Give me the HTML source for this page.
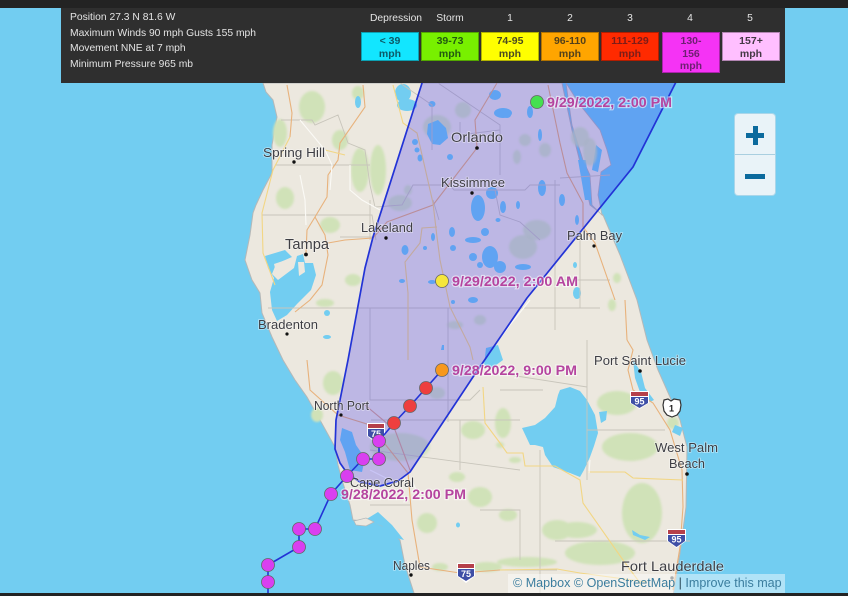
<!DOCTYPE html>
<html><head><meta charset="utf-8">
<style>
html,body{margin:0;padding:0;width:848px;height:596px;overflow:hidden;background:#72cdf1;font-family:"Liberation Sans",sans-serif}
svg{position:absolute;left:0;top:0;filter:blur(.3px)}
.top{position:absolute;left:0;top:0;width:848px;height:8px;background:#232323}
.bot{position:absolute;left:0;top:593px;width:848px;height:3px;background:#232323}
.panel{position:absolute;left:61px;top:8px;width:724px;height:75px;background:#2f2f2f;color:#e4e4e4;font-size:10.3px;filter:blur(.3px)}
.panel p{position:absolute;left:9px;margin:0;white-space:nowrap;line-height:14px}
.h{position:absolute;top:4px;width:60px;text-align:center;line-height:14px;white-space:nowrap}
.b{position:absolute;top:24px;width:58px;height:29px;text-align:center;font-weight:bold;font-size:10.5px;line-height:12.5px;box-sizing:border-box;padding-top:2px;border:1px solid rgba(0,0,0,.3)}
.zoom{position:absolute;left:735px;top:114px;width:40px;height:81px;background:#e9f3f8;border-radius:3px;box-shadow:0 0 0 1px #a9d6ea}
.zoom i{position:absolute;background:#0b6a9d;display:block}
.attr{position:absolute;left:508px;top:574px;width:277px;height:19px;background:rgba(255,255,255,.45);font-size:12.55px;line-height:19px;color:#3b7d9e;padding-left:5px;box-sizing:border-box;white-space:nowrap;filter:blur(.3px)}
.gr{filter:blur(1px)}
</style></head><body>
<svg width="848" height="596" viewBox="0 0 848 596" font-family="'Liberation Sans',sans-serif">
<rect width="848" height="596" fill="#72cdf1"/>
<!-- land -->
<path fill="#ece8df" stroke="#b4b8b8" stroke-width="1" d="M263 83L266 92 273 100 277 117 272 145 272 173 263 190 256 205 253 213 250 235 245 260 252 280 260 293 262 313 272 337 283 360 295 380 307 397 320 420 335 447 338 465 342 480 350 505 353 520 373 522 385 527 400 540 405 565 413 590 415 596H673L680 553 686 507 687 447 680 420 670 397 658 370 647 340 637 300 620 255 603 215 590 205 582 170 572 130 562 83Z"/>
<!-- merritt island -->
<path fill="#ece8df" stroke="#b4b8b8" stroke-width=".8" d="M566 83L580 105 600 130 607 150 611 165 601 172 598 195 602 215 592 205 590 175 583 160 572 125Z"/>
<path fill="#72cdf1" d="M578 160L586 160 590 200 585 200ZM596 145L602 150 598 172 592 170Z"/>
<!-- tampa bay -->
<path fill="#72cdf1" d="M265 256L285 250 292 257 276 264 272 274 278 280 294 268 297 256 303 254 305 263 313 263 316 275 311 290 297 304 287 315 277 321 272 310 270 292 274 278 268 268Z"/>
<path fill="#ece8df" d="M274 264L292 258 294 263 276 272ZM298 262L304 262 305 272 299 276Z"/>
<path fill="#72cdf1" d="M342 428L352 432 356 445 365 458 362 472 350 470 345 452 340 440ZM365 520L378 512 392 525 404 540 396 538 382 526Z"/>
<path fill="#ece8df" stroke="#b4b8b8" stroke-width=".7" d="M354 521L366 518 374 522 366 526 356 525Z"/>
<!-- greens -->
<g class="gr" fill="#d0e2b8">
<ellipse cx="312" cy="107" rx="13" ry="16"/><ellipse cx="285" cy="198" rx="9" ry="11"/><ellipse cx="330" cy="225" rx="10" ry="8"/><ellipse cx="360" cy="170" rx="9" ry="22"/><ellipse cx="378" cy="170" rx="8" ry="25"/><ellipse cx="340" cy="140" rx="8" ry="10"/><ellipse cx="280" cy="133" rx="7" ry="14"/><ellipse cx="353" cy="280" rx="8" ry="6"/><ellipse cx="358" cy="93" rx="6" ry="7"/><ellipse cx="333" cy="383" rx="10" ry="12"/><ellipse cx="317" cy="415" rx="6" ry="7"/><ellipse cx="325" cy="303" rx="9" ry="4"/>
<ellipse cx="473" cy="430" rx="12" ry="9"/><ellipse cx="427" cy="523" rx="10" ry="10"/><ellipse cx="457" cy="477" rx="8" ry="5"/><ellipse cx="480" cy="497" rx="12" ry="10"/><ellipse cx="440" cy="567" rx="8" ry="4"/><ellipse cx="487" cy="567" rx="15" ry="5"/><ellipse cx="500" cy="445" rx="4" ry="3"/>
<ellipse cx="617" cy="403" rx="20" ry="12"/><ellipse cx="630" cy="447" rx="28" ry="14"/><ellipse cx="642" cy="513" rx="20" ry="30"/><ellipse cx="557" cy="530" rx="15" ry="10"/><ellipse cx="577" cy="530" rx="20" ry="8"/><ellipse cx="600" cy="553" rx="35" ry="12"/><ellipse cx="508" cy="515" rx="9" ry="6"/><ellipse cx="527" cy="562" rx="30" ry="5"/><ellipse cx="673" cy="423" rx="6" ry="6"/><ellipse cx="503" cy="423" rx="8" ry="15"/><ellipse cx="515" cy="460" rx="6" ry="3"/><ellipse cx="612" cy="305" rx="4" ry="6"/><ellipse cx="617" cy="278" rx="4" ry="5"/>
<g fill-opacity=".8"><ellipse cx="517" cy="157" rx="4" ry="7"/><ellipse cx="523" cy="247" rx="14" ry="12"/><ellipse cx="537" cy="230" rx="14" ry="10"/><ellipse cx="400" cy="203" rx="12" ry="8"/><ellipse cx="408" cy="190" rx="4" ry="5"/><ellipse cx="463" cy="110" rx="8" ry="8"/><ellipse cx="400" cy="447" rx="30" ry="14"/><ellipse cx="437" cy="393" rx="8" ry="6"/><ellipse cx="580" cy="137" rx="9" ry="10"/><ellipse cx="590" cy="152" rx="7" ry="14"/><ellipse cx="437" cy="127" rx="14" ry="12"/><ellipse cx="525" cy="140" rx="6" ry="6"/><ellipse cx="545" cy="150" rx="6" ry="7"/><ellipse cx="455" cy="325" rx="8" ry="4"/><ellipse cx="480" cy="320" rx="6" ry="5"/></g>
</g>
<!-- lakes -->
<g fill="#72cdf1">
<path d="M570 387L580 391 587 400 595 415 598 433 594 446 590 457 584 470 580 477 570 473 553 467 545 455 543 447 535 445 530 445 522 428 535 425 545 418 555 407 558 395 560 390Z"/>
<path d="M599 412L607 411 606 420 601 423Z"/>
<path d="M486 348L498 345 503 360 492 368 484 365Z"/>
<path d="M428 124L438 120 446 128 448 138 440 145 432 144 427 134Z"/>
<ellipse cx="495" cy="95" rx="6" ry="5"/><ellipse cx="503" cy="113" rx="9" ry="5"/><ellipse cx="492" cy="193" rx="6" ry="6"/><ellipse cx="478" cy="208" rx="7" ry="13"/><ellipse cx="432" cy="104" rx="3.500" ry="3"/><ellipse cx="415" cy="142" rx="3" ry="3"/><ellipse cx="417" cy="150" rx="2.500" ry="2.500"/><ellipse cx="420" cy="158" rx="2.500" ry="3.500"/><ellipse cx="450" cy="157" rx="3" ry="3"/><ellipse cx="452" cy="232" rx="3" ry="5"/><ellipse cx="473" cy="240" rx="8" ry="3"/><ellipse cx="485" cy="232" rx="4" ry="4"/><ellipse cx="503" cy="207" rx="3" ry="6"/><ellipse cx="518" cy="205" rx="2" ry="4"/><ellipse cx="498" cy="220" rx="2.500" ry="2"/><ellipse cx="453" cy="248" rx="3" ry="3"/><ellipse cx="473" cy="257" rx="4" ry="4"/><ellipse cx="490" cy="257" rx="8" ry="11"/><ellipse cx="480" cy="265" rx="3" ry="3"/><ellipse cx="500" cy="267" rx="6" ry="6"/><ellipse cx="523" cy="267" rx="8" ry="3"/><ellipse cx="405" cy="250" rx="3.500" ry="5"/><ellipse cx="433" cy="237" rx="2" ry="4"/><ellipse cx="425" cy="248" rx="2" ry="2"/><ellipse cx="402" cy="281" rx="3" ry="2"/><ellipse cx="432" cy="282" rx="4" ry="2"/><ellipse cx="473" cy="300" rx="5" ry="3"/><ellipse cx="453" cy="302" rx="2" ry="2"/><ellipse cx="403" cy="93" rx="8" ry="9"/><ellipse cx="407" cy="105" rx="10" ry="6"/><ellipse cx="358" cy="102" rx="3" ry="6"/><ellipse cx="327" cy="313" rx="3" ry="3"/><ellipse cx="327" cy="337" rx="4" ry="2"/><ellipse cx="542" cy="188" rx="4" ry="8"/><ellipse cx="575" cy="265" rx="2" ry="3"/><ellipse cx="577" cy="293" rx="4" ry="6"/><ellipse cx="577" cy="220" rx="2" ry="5"/><ellipse cx="562" cy="200" rx="3" ry="6"/><ellipse cx="507" cy="115" rx="4" ry="3"/><ellipse cx="530" cy="112" rx="3" ry="6"/><ellipse cx="540" cy="135" rx="2" ry="6"/>
<path d="M633 360L641 372 645 388 654 400 650 402 640 392 635 378ZM675 425L683 428 680 436 672 432ZM632 530L640 535 650 537 645 540 633 535ZM442 345L444 345 444 350 441 350Z"/>
<ellipse cx="458" cy="525" rx="2" ry="2.500"/>
</g>
<!-- county lines -->
<g fill="none" stroke="#c8c5bb" stroke-width=".9">
<path d="M281 120H312L315 125 338 115 348 143 365 150 370 185 375 207 402 205 413 185 450 185 454 190 525 190 530 185 560 185M262 215H372L376 240M275 165L370 165M400 83L432 105V150M500 130L460 135V122M495 190L500 215 520 222 540 240M433 200L439 220M370 200V240M373 237H340M268 308H600M370 308V400M370 400H470L480 390M371 420H520M370 450L520 470M448 360L448 422M448 308V360M540 450V593M500 390H543M587 340V480M510 375L587 387M587 430H665M555 541H690M500 570H557M460 420V470M480 510H520V560M370 505H410M438 83L500 125V175M610 175L560 178M555 330V180M560 280H610M580 240L580 308"/>
</g>
<!-- roads -->
<g fill="none" stroke-width="1.1">
<g stroke="#e8b27c">
<path d="M363 85L365 107 340 143 338 160 328 175 327 197 315 217 307 230 306 253M315 217L325 235 328 255 322 285 310 300 295 312"/>
<path d="M328 243L345 240 373 238 387 222 433 205 460 170 477 148 475 120 497 83"/>
<path d="M548 85L560 143 567 173 583 203 583 227 595 243 608 280 615 300M627 340L633 350 628 370 633 390 653 403 670 430 682 470 683 507 680 547 673 590"/>
<path d="M307 360L310 390 338 415 370 425 408 473 412 520 420 567 460 573 500 570M625 300L627 340"/>
<path d="M287 85L292 113 290 137"/>
</g>
<g stroke="#f2d684">
<path d="M290 137L273 170 262 213 263 253 275 285M393 85L403 123 417 133 433 203 437 237 440 260 450 307 470 347 473 360"/>
<path d="M437 227L422 228 420 243 405 262 408 293 408 360M483 387L485 423 500 443M500 443L507 453 523 453 525 466 555 466 580 480 583 503 623 560 643 587M588 472L625 472 633 478 683 480M500 570L557 569 580 573 647 582M325 150L345 155"/>
</g>
<g stroke="#fbfaf6">
<path d="M300 120L325 150 332 165 330 190M300 175L305 200 306 225M350 165L350 190 362 200 380 210M590 460L589 473M495 345L510 325 530 300M420 500L412 480M370 470L390 480"/>
</g>
<path stroke="#d9a78e" d="M365 405L395 430 410 470"/>
</g>
<!-- cone -->
<path fill="rgba(40,30,245,.24)" stroke="#2233d6" stroke-width="1.7" stroke-linejoin="round" d="M423 80L373 237 365 268 348 360 336 420 335 449 340 463 347 473 360 482 380 486 398 481 410 472 473 377 527 298 633 167 677 80Z"/>
<!-- shields -->
<g font-weight="bold" font-size="9" text-anchor="middle" fill="#fff">
<path fill="#fff" d="M367 423H385V436L376 443 367 436Z"/><path fill="#b5404a" d="M368 424H384V428H368Z"/><path fill="#3f4fa6" d="M368 429H384V436L376 441 368 436Z"/><text x="376" y="437">75</text>
<path fill="#fff" d="M457 563H475V576L466 583 457 576Z"/><path fill="#b5404a" d="M458 564H474V568H458Z"/><path fill="#3f4fa6" d="M458 569H474V576L466 581 458 576Z"/><text x="466" y="577">75</text>
<path fill="#fff" d="M630 391H649V403L639.500 409 630 403Z"/><path fill="#b5404a" d="M631 392H648V396H631Z"/><path fill="#3f4fa6" d="M631 397H648V403L639.500 408 631 403Z"/><text x="639.500" y="404.500">95</text>
<path fill="#fff" d="M667 529H686V541L676.500 548 667 541Z"/><path fill="#b5404a" d="M668 530H685V534H668Z"/><path fill="#3f4fa6" d="M668 535H685V541L676.500 547 668 541Z"/><text x="676.500" y="542.500">95</text>
</g>
<path fill="#fff" stroke="#333" stroke-width="1.2" d="M664 400L668 399 671 401 674 399 680 400 681 405 680 411 677 415 672 417 667 415 664 411 663 405Z"/>
<text x="671.500" y="411.500" font-size="9" font-weight="bold" text-anchor="middle" fill="#222">1</text>
<!-- places -->
<g fill="#111"><circle cx="477" cy="148" r="1.8"/><circle cx="294" cy="162" r="1.7"/><circle cx="472" cy="193" r="1.7"/><circle cx="386" cy="238" r="1.7"/><circle cx="306" cy="254.500" r="1.9"/><circle cx="594" cy="246" r="1.6"/><circle cx="287" cy="334" r="1.6"/><circle cx="341" cy="415" r="1.6"/><circle cx="411" cy="575" r="1.7"/><circle cx="640" cy="371" r="1.8"/><circle cx="687" cy="474" r="1.8"/><circle cx="672" cy="578" r="1.7" fill="#666"/></g>
<g fill="#3e3e44" stroke="rgba(255,255,255,.45)" stroke-width="1.6" paint-order="stroke" font-size="12.500">
<text x="451" y="142" font-size="14" textLength="52" lengthAdjust="spacingAndGlyphs">Orlando</text>
<text x="263" y="157" textLength="62" lengthAdjust="spacingAndGlyphs">Spring Hill</text>
<text x="441" y="187" textLength="64" lengthAdjust="spacingAndGlyphs">Kissimmee</text>
<text x="361" y="232" textLength="52" lengthAdjust="spacingAndGlyphs">Lakeland</text>
<text x="285" y="249" font-size="15" textLength="44" lengthAdjust="spacingAndGlyphs">Tampa</text>
<text x="567" y="240" textLength="55" lengthAdjust="spacingAndGlyphs">Palm Bay</text>
<text x="258" y="329" textLength="60" lengthAdjust="spacingAndGlyphs">Bradenton</text>
<text x="314" y="410" textLength="55" lengthAdjust="spacingAndGlyphs">North Port</text>
<text x="350" y="487" font-size="13" textLength="64" lengthAdjust="spacingAndGlyphs">Cape Coral</text>
<text x="393" y="570" textLength="37" lengthAdjust="spacingAndGlyphs">Naples</text>
<text x="594" y="365" textLength="92" lengthAdjust="spacingAndGlyphs">Port Saint Lucie</text>
<text x="655" y="452" textLength="63" lengthAdjust="spacingAndGlyphs">West Palm</text>
<text x="669" y="468" textLength="36" lengthAdjust="spacingAndGlyphs">Beach</text>
<text x="621" y="571" font-size="14" textLength="103" lengthAdjust="spacingAndGlyphs">Fort Lauderdale</text>
</g>
<!-- track -->
<path fill="none" stroke="#2233d6" stroke-width="1.6" d="M442 370L426 388 410 406 394 423 379 441V459H363L347 476 331 494 315 529H299V547L268 565V582L268 596"/>
<g stroke="#666" stroke-width=".8">
<g fill="#d93ff0"><circle cx="379" cy="441" r="6.500"/><circle cx="379" cy="459" r="6.500"/><circle cx="363" cy="459" r="6.500"/><circle cx="347" cy="476" r="6.500"/><circle cx="331" cy="494" r="6.500"/><circle cx="315" cy="529" r="6.500"/><circle cx="299" cy="529" r="6.500"/><circle cx="299" cy="547" r="6.500"/><circle cx="268" cy="565" r="6.500"/><circle cx="268" cy="582" r="6.500"/></g>
<g fill="#ee3f3f"><circle cx="426" cy="388" r="6.500"/><circle cx="410" cy="406" r="6.500"/><circle cx="394" cy="423" r="6.500"/></g>
<circle cx="442" cy="370" r="6.500" fill="#f7981d"/>
<circle cx="442" cy="281" r="6.500" fill="#f5e63c"/>
<circle cx="537" cy="102" r="6.500" fill="#45e04f"/>
</g>
<!-- labels -->
<g font-weight="bold" font-size="13.500" fill="#b5449f" stroke="rgba(255,255,255,.55)" stroke-width="2.200" paint-order="stroke">
<text x="547" y="107" textLength="125" lengthAdjust="spacingAndGlyphs">9/29/2022, 2:00 PM</text>
<text x="452" y="286" textLength="126" lengthAdjust="spacingAndGlyphs">9/29/2022, 2:00 AM</text>
<text x="452" y="375" textLength="125" lengthAdjust="spacingAndGlyphs">9/28/2022, 9:00 PM</text>
<text x="341" y="499" textLength="125" lengthAdjust="spacingAndGlyphs">9/28/2022, 2:00 PM</text>
</g>
</svg>
<div class="top"></div>
<div class="bot"></div>
<div class="panel">
<p style="top:3px">Position 27.3 N 81.6 W</p>
<p style="top:19px">Maximum Winds 90 mph Gusts 155 mph</p>
<p style="top:34px">Movement NNE at 7 mph</p>
<p style="top:50px">Minimum Pressure 965 mb</p>
<div class="h" style="left:305px">Depression</div>
<div class="h" style="left:359px">Storm</div>
<div class="h" style="left:419px">1</div>
<div class="h" style="left:479px">2</div>
<div class="h" style="left:539px">3</div>
<div class="h" style="left:599px">4</div>
<div class="h" style="left:659px">5</div>
<div class="b" style="left:300px;background:#12e6ff;color:#0c5a68">&lt; 39<br>mph</div>
<div class="b" style="left:360px;background:#78f000;color:#215a10">39-73<br>mph</div>
<div class="b" style="left:420px;background:#ffff00;color:#4a4a20">74-95<br>mph</div>
<div class="b" style="left:480px;background:#ffa500;color:#52401a">96-110<br>mph</div>
<div class="b" style="left:540px;background:#ff2a00;color:#7c1c18">111-129<br>mph</div>
<div class="b" style="left:601px;height:41px;background:#f533f5;color:#6e1f72">130-<br>156<br>mph</div>
<div class="b" style="left:661px;background:#ffbfff;color:#443844">157+<br>mph</div>
</div>
<div class="zoom">
<i style="left:11px;top:19px;width:18px;height:5px"></i><i style="left:17.500px;top:12px;width:5px;height:19px"></i>
<div style="position:absolute;left:0;top:40px;width:40px;height:1px;background:#a9cfe0"></div>
<i style="left:10px;top:59.500px;width:20px;height:5px"></i>
</div>
<div class="attr">© Mapbox © OpenStreetMap <span style="color:#2b4a5a">|</span> Improve this map</div>
</body></html>
